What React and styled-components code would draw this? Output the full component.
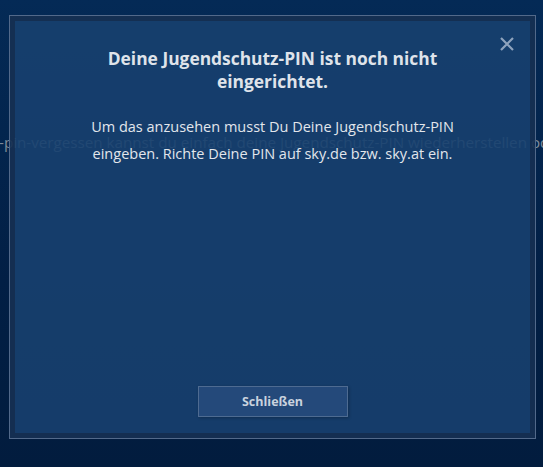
import React from "react"
import styled, { createGlobalStyle } from "styled-components"

const GlobalStyle = createGlobalStyle`
  html, body {
    margin: 0;
    padding: 0;
    height: 100%;
    overflow: hidden;
  }
  body {
    background: linear-gradient(180deg, #042a56 0%, #021f45 60%, #021c3e 100%);
    font-family: "Open Sans", "Noto Sans", sans-serif;
  }
`

function App() {
  return (
    <Page>
      <GlobalStyle />
      <BackgroundText>
        -pin-vergessen kannst du einfach deine Jugendschutz-PIN wiederherstellen oder
      </BackgroundText>
      <Modal>
        <Panel>
          <CloseButton aria-label="Schließen">
            <svg width="14" height="14" viewBox="0 0 14 14">
              <path
                d="M1 1 L13 13 M13 1 L1 13"
                stroke="#8ea3bd"
                strokeWidth="2.2"
              />
            </svg>
          </CloseButton>
          <Title>
            Deine Jugendschutz-PIN ist noch nicht
            <br />
            eingerichtet.
          </Title>
          <Description>
            Um das anzusehen musst Du Deine Jugendschutz-PIN
            <br />
            eingeben. Richte Deine PIN auf sky.de bzw. sky.at ein.
          </Description>
          <Footer>
            <ActionButton>Schließen</ActionButton>
          </Footer>
        </Panel>
      </Modal>
    </Page>
  )
}

export default App

const Page = styled.div`
  position: relative;
  height: 100vh;
  overflow: hidden;
`
const BackgroundText = styled.p`
  margin: 0 0 0 -1px;
  padding-top: 128px;
  white-space: nowrap;
  font-size: 15.2px;
  line-height: 28px;
  color: #7f8b99;
`
const Modal = styled.div`
  position: absolute;
  left: 9px;
  top: 15px;
  width: 527px;
  height: 424px;
  border: 1px solid #52698a;
  box-sizing: border-box;
  display: flex;
`
const Panel = styled.div`
  position: relative;
  flex: 1;
  border: 5px solid rgba(22, 48, 82, 0.92);
  background: rgba(23, 64, 111, 0.9);
  background-clip: padding-box;
  display: flex;
  flex-direction: column;
  align-items: center;
  padding: 26px 30px 16px;
`
const CloseButton = styled.button`
  position: absolute;
  top: 16px;
  right: 16px;
  width: 14px;
  height: 14px;
  padding: 0;
  border: 0;
  background: none;
  display: flex;
`
const Title = styled.h1`
  margin: 0;
  font-size: 17.4px;
  line-height: 23px;
  font-weight: 700;
  text-align: center;
  color: #dfe3ea;
`
const Description = styled.p`
  margin: 20px 0 0;
  font-size: 14.5px;
  line-height: 27px;
  text-align: center;
  color: #e2e6ec;
`
const Footer = styled.div`
  margin-top: auto;
  display: flex;
  justify-content: center;
`
const ActionButton = styled.button`
  width: 150px;
  height: 31px;
  border: 1px solid #4e6b91;
  background: #24497a;
  color: #c9d2de;
  font-family: "Open Sans", "Noto Sans", sans-serif;
  font-weight: 700;
  font-size: 12.5px;
  box-shadow: 1px 1px 3px rgba(0, 0, 0, 0.25);
`
